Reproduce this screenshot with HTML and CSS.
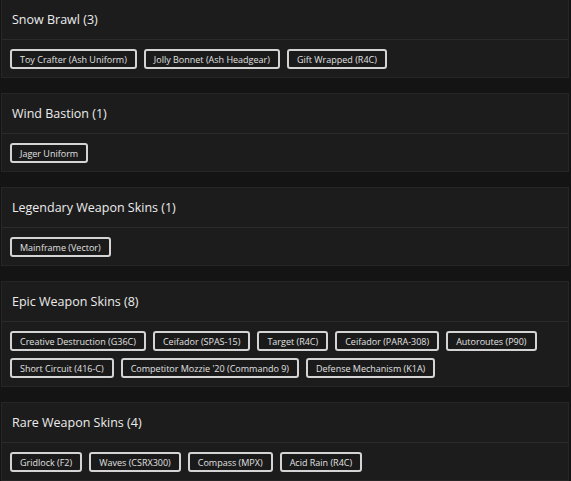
FILE: index.html
```html
<!DOCTYPE html>
<html>
<head>
<meta charset="utf-8">
<link rel="stylesheet" href="styles.css">
</head>
<body>
<div class="list">
  <section class="card">
    <h2 class="card-title">Snow Brawl (3)</h2>
    <div class="chips">
      <span class="chip">Toy Crafter (Ash Uniform)</span>
      <span class="chip">Jolly Bonnet (Ash Headgear)</span>
      <span class="chip">Gift Wrapped (R4C)</span>
    </div>
  </section>
  <section class="card">
    <h2 class="card-title">Wind Bastion (1)</h2>
    <div class="chips">
      <span class="chip">Jager Uniform</span>
    </div>
  </section>
  <section class="card">
    <h2 class="card-title">Legendary Weapon Skins (1)</h2>
    <div class="chips">
      <span class="chip">Mainframe (Vector)</span>
    </div>
  </section>
  <section class="card">
    <h2 class="card-title">Epic Weapon Skins (8)</h2>
    <div class="chips">
      <span class="chip">Creative Destruction (G36C)</span>
      <span class="chip">Ceifador (SPAS-15)</span>
      <span class="chip">Target (R4C)</span>
      <span class="chip">Ceifador (PARA-308)</span>
      <span class="chip">Autoroutes (P90)</span>
      <span class="chip">Short Circuit (416-C)</span>
      <span class="chip">Competitor Mozzie '20 (Commando 9)</span>
      <span class="chip">Defense Mechanism (K1A)</span>
    </div>
  </section>
  <section class="card">
    <h2 class="card-title">Rare Weapon Skins (4)</h2>
    <div class="chips">
      <span class="chip">Gridlock (F2)</span>
      <span class="chip">Waves (CSRX300)</span>
      <span class="chip">Compass (MPX)</span>
      <span class="chip">Acid Rain (R4C)</span>
    </div>
  </section>
</div>
</body>
</html>
```

FILE: styles.css
```css
html, body {
  margin: 0;
  padding: 0;
  background: #141414;
  font-family: "Open Sans", "Liberation Sans", sans-serif;
  color: #e6e6e6;
}
.list {
  display: flex;
  flex-direction: column;
  gap: 15px;
  margin: -1px 2px 0 1px;
}
.card {
  background: #1c1c1c;
  border: 1px solid #262626;
}
.card-title {
  margin: 0;
  height: 39px;
  display: flex;
  align-items: center;
  padding: 0 10px;
  font-size: 12.5px;
  font-weight: 500;
  color: #ececec;
  border-bottom: 1px solid #2b2b2b;
}
.chips {
  display: flex;
  flex-wrap: wrap;
  gap: 7px;
  padding: 9px 8px 8px 8px;
}
.chip {
  display: flex;
  align-items: center;
  height: 16px;
  padding: 0 8px;
  border: 2px solid #d4d4d4;
  border-radius: 3px;
  background: #1a1a1a;
  font-size: 9px;
  color: #e0e0e0;
  white-space: nowrap;
}
```
